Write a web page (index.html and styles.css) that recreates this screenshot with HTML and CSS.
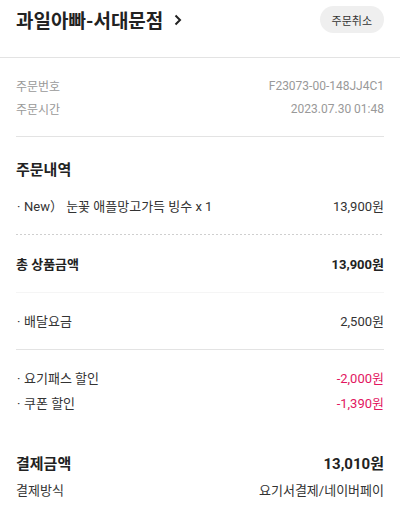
FILE: index.html
```html
<html lang="ko">
<head>
    <meta charset="UTF-8">
    <meta name="viewport" content="width=device-width, initial-scale=1.0">
    <title>주문상세</title>
    <link rel="stylesheet" href="styles.css">
</head>
<body>
    <div class="header">
        <div class="store">
            <span>과일아빠-서대문점</span>
            <svg class="chevron" width="8" height="12" viewBox="0 0 8 12">
                <path d="M1.5 1.5 L6 6 L1.5 10.5" fill="none" stroke="#222" stroke-width="2"/>
            </svg>
        </div>
        <button class="cancel">주문취소</button>
    </div>

    <div class="section meta">
        <div class="row">
            <span>주문번호</span>
            <span>F23073-00-148JJ4C1</span>
        </div>
        <div class="row">
            <span>주문시간</span>
            <span>2023.07.30 01:48</span>
        </div>
    </div>

    <div class="section items">
        <h2>주문내역</h2>
        <div class="row item">
            <span class="bullet">New） 눈꽃 애플망고가득 빙수 x 1</span>
            <span>13,900원</span>
        </div>
    </div>

    <div class="section subtotal">
        <div class="row strong">
            <span>총 상품금액</span>
            <span>13,900원</span>
        </div>
    </div>

    <div class="section delivery">
        <div class="row item">
            <span class="bullet">배달요금</span>
            <span>2,500원</span>
        </div>
    </div>

    <div class="section discounts">
        <div class="row item short">
            <span class="bullet">요기패스 할인</span>
            <span class="minus">-2,000원</span>
        </div>
        <div class="row item short">
            <span class="bullet">쿠폰 할인</span>
            <span class="minus">-1,390원</span>
        </div>
    </div>

    <div class="section total">
        <div class="row big">
            <span>결제금액</span>
            <span>13,010원</span>
        </div>
        <div class="row item">
            <span>결제방식</span>
            <span>요기서결제/네이버페이</span>
        </div>
    </div>
</body>
</html>
```

FILE: styles.css
```css
body {
    font-family: Roboto, "Noto Sans CJK KR", sans-serif;
    margin: 0;
    background: #fff;
    color: #333;
}

.header {
    display: flex;
    justify-content: space-between;
    align-items: center;
    height: 27px;
    padding: 6px 16px 24px;
    border-bottom: 1px solid #e3e3e3;
}

.store {
    display: flex;
    align-items: center;
    gap: 11px;
    font-size: 19px;
    font-weight: bold;
    color: #222;
}

.chevron {
    margin-top: 1px;
}

.cancel {
    height: 27px;
    padding: 0 12px;
    border: none;
    border-radius: 14px;
    background-color: #efefef;
    color: #333;
    font-family: inherit;
    font-size: 11px;
}

.section {
    margin: 0 16px;
}

.row {
    display: flex;
    justify-content: space-between;
    align-items: center;
}

.meta {
    padding: 16px 0;
    border-bottom: 1px solid #e3e3e3;
    font-size: 12px;
    color: #999;
}

.meta .row {
    height: 23px;
}

.items {
    padding: 20px 0 17px;
    background-image: repeating-linear-gradient(90deg, #cfcfcf 0 2px, transparent 2px 4px);
    background-size: 100% 1px;
    background-repeat: no-repeat;
    background-position: bottom;
}

h2 {
    margin: 0 0 9px;
    height: 26px;
    line-height: 26px;
    font-size: 15px;
    font-weight: bold;
    color: #222;
}

.item {
    height: 26px;
    font-size: 13px;
    color: #333;
}

.item.short {
    height: 25px;
}

.bullet::before {
    content: "·";
    display: inline-block;
    width: 7px;
    margin-left: 1px;
}

.subtotal {
    padding: 15px 0 16px;
    border-bottom: 1px solid #f5f5f5;
}

.strong {
    height: 26px;
    font-size: 13px;
    font-weight: bold;
    color: #222;
}

.delivery {
    padding: 14px 0 16px;
    border-bottom: 1px solid #e3e3e3;
}

.discounts {
    padding-top: 15px;
}

.minus {
    color: #e2165f;
}

.total {
    padding-top: 33px;
}

.big {
    height: 28px;
    font-size: 15px;
    font-weight: bold;
    color: #222;
}
```
